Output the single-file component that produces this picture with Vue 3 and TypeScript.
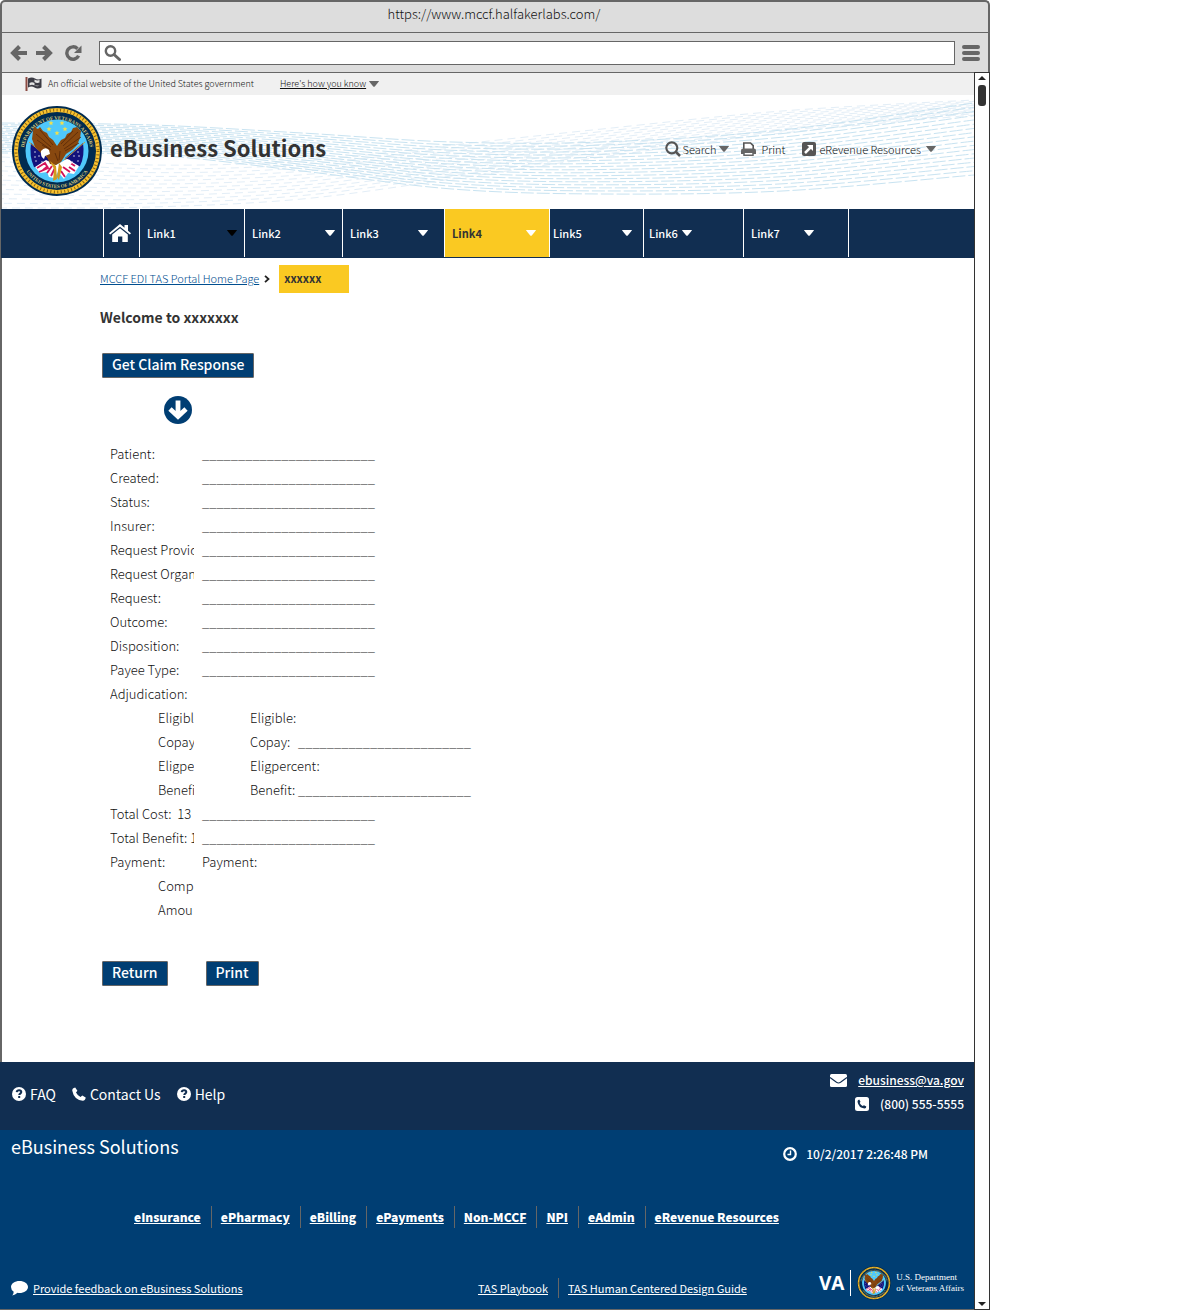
<script setup lang="ts">
interface NavItem { label: string; mod?: string }
interface Row { label: string; nested?: boolean; value?: string; sub?: string; blank?: boolean }

const navItems: NavItem[] = [
  { label: 'Link1', mod: 'muted' },
  { label: 'Link2' },
  { label: 'Link3', mod: 'pad-md' },
  { label: 'Link4', mod: 'active' },
  { label: 'Link5', mod: 'tight' },
  { label: 'Link6', mod: 'packed' },
  { label: 'Link7', mod: 'pad-lg' },
]

const blankLine = '_'.repeat(24)

const rows: Row[] = [
  { label: 'Patient:', blank: true },
  { label: 'Created:', blank: true },
  { label: 'Status:', blank: true },
  { label: 'Insurer:', blank: true },
  { label: 'Request Provid', blank: true },
  { label: 'Request Organ', blank: true },
  { label: 'Request:', blank: true },
  { label: 'Outcome:', blank: true },
  { label: 'Disposition:', blank: true },
  { label: 'Payee Type:', blank: true },
  { label: 'Adjudication:' },
  { label: 'Eligibl', nested: true, sub: 'Eligible:' },
  { label: 'Copay', nested: true, sub: 'Copay:', blank: true },
  { label: 'Eligpe', nested: true, sub: 'Eligpercent:' },
  { label: 'Benefi', nested: true, sub: 'Benefit:', blank: true },
  { label: 'Total Cost:  13', blank: true },
  { label: 'Total Benefit: 1', blank: true },
  { label: 'Payment:', value: 'Payment:' },
  { label: 'Comp', nested: true },
  { label: 'Amou', nested: true },
]

const businessLinks = ['eInsurance', 'ePharmacy', 'eBilling', 'ePayments', 'Non-MCCF', 'NPI', 'eAdmin', 'eRevenue Resources']

type Pt = [number, number]

// Smooth curve through a list of points
function smooth(p: Pt[]): string {
  let d = `M${p[0][0]} ${p[0][1]}`
  for (let i = 0; i < p.length - 1; i++) {
    const a = p[Math.max(i - 1, 0)]
    const b = p[i]
    const c = p[i + 1]
    const e = p[Math.min(i + 2, p.length - 1)]
    d += ` C${b[0] + (c[0] - a[0]) / 6} ${b[1] + (c[1] - a[1]) / 6} ${c[0] - (e[0] - b[0]) / 6} ${c[1] - (e[1] - b[1]) / 6} ${c[0]} ${c[1]}`
  }
  return d
}

// Fills the band between two edges with evenly spread curves
function band(xs: number[], top: number[], bottom: number[], n: number): string[] {
  return Array.from({ length: n }, (_, k) => {
    const t = k / (n - 1)
    return smooth(xs.map((x, i) => [x, top[i] + (bottom[i] - top[i]) * t] as Pt))
  })
}

const xs = [0, 150, 300, 450, 600, 780, 972]
const blueWaves = band(xs, [28, 30, 38, 47, 47, 35, 8], [58, 60, 76, 94, 99, 96, 80], 18)
const paleWaves = band(xs, [62, 70, 66, 50, 34, 16, 5], [113, 112, 104, 84, 62, 38, 20], 12)
</script>

<template>
  <div class="browser">
    <svg class="defs" width="0" height="0" aria-hidden="true">
      <symbol id="caret" viewBox="0 0 10 6"><path d="M.6 0h8.800q.6 0 .4.600L6 5.200q-1 1-2 0L.2.600Q0 0 .6 0z" fill="currentColor" /></symbol>
      <symbol id="question" viewBox="0 0 14 14">
        <circle cx="7" cy="7" r="7" fill="#fff" />
        <path d="M4.700 5.200C4.900 3.700 6 3.200 7.100 3.200c1.200 0 2.200.8 2.200 1.900 0 1.600-2 1.500-2 2.900" fill="none" stroke="#112e51" stroke-width="2" />
        <rect x="6.200" y="9" width="2" height="2" fill="#112e51" />
      </symbol>
      <symbol id="seal" viewBox="0 0 90 90">
        <defs>
          <path id="arc-top" d="M11.500 47a33.500 33.500 0 0 1 67 0" />
          <path id="arc-bottom" d="M8 45a37 37 0 0 0 74 0" />
        </defs>
        <circle cx="45" cy="45" r="45" fill="#002b50" />
        <circle cx="45" cy="45" r="41" fill="none" stroke="#f9c22e" stroke-width="4" />
        <circle cx="45" cy="45" r="41" fill="none" stroke="#8a6414" stroke-width="3" stroke-dasharray="1 2.500" />
        <circle cx="45" cy="45" r="31.500" fill="#4fc8fb" />
        <text class="seal-text"><textPath href="#arc-top" startOffset="50%" text-anchor="middle">DEPARTMENT OF VETERANS AFFAIRS</textPath></text>
        <text class="seal-text"><textPath href="#arc-bottom" startOffset="50%" text-anchor="middle">UNITED STATES OF AMERICA</textPath></text>
        <g fill="#f5e04a">
          <path v-for="(s, i) in [[39, 17], [50, 17], [37, 23], [53, 23], [45, 27]]" :key="i" :transform="`translate(${s[0]} ${s[1]})`" d="M0-2.500.7-.8 2.500-.7 1.100.5 1.600 2.300 0 1.300-1.600 2.300-1.100.5-2.500-.7-.7-.8z" />
        </g>
        <path d="M19 37l19 15-4 12-12-3q-5-11-3-24zM71 37L53 52l4 11 11-3q5-10 3-23z" fill="#12127c" />
        <path d="M17 36l22 18M73 36L52 54" stroke="#c9a13c" stroke-width="1" />
        <g fill="#fff">
          <circle v-for="(s, i) in [[23, 46], [27, 50], [24, 55], [30, 56], [66, 46], [62, 50], [66, 55], [60, 56], [23, 51], [67, 50]]" :key="i" :cx="s[0]" :cy="s[1]" r=".7" />
        </g>
        <path d="M23 61l11-7 10 5 11-6 12 7-5 8-6-1-4 6-6-7-4 6-5-1-2-5-7 1z" fill="#fff" />
        <path d="M25 62l8-5 3 5-9 4M35 67l5-7M39 70l4-8M55 55l8 5M51 61l7 5M49 65l4 6M57 61l6 4M31 64l5-4" fill="none" stroke="#d4145a" stroke-width="1.900" />
        <path d="M21 25l1-4 4 2 2-2 3 4 4 2 2 4 4 3 4 6 4-6 4-2 2-4 4-2 2-4 4-1 4 4-1 7-3 7-5 5-6 4-5 8-5 3-6-1-3-7-6-4-6-6-3-8z" fill="#88480f" />
        <path d="M24 28l15 13M28 24l13 15M25 34l13 9M30 39l9 5M66 26L51 40M69 31L52 43M67 37l-14 8M61 25L49 38M43 47l3 8M48 45l-1 9" stroke="#5b2a08" stroke-width=".9" fill="none" />
        <path d="M29 45q4-5 8-1l1 4-5 2-1 3q-4-3-3-8zM51 56q3-4 7-2l2 3-4 4-5-1z" fill="#fff" />
        <path d="M38 55l6 5 1 13-4 2 1-12zM47 57l3 4-3 13-2-3z" fill="#d49a1c" />
      </symbol>
    </svg>

    <header class="chrome">
      <div class="title-bar">https://www.mccf.halfakerlabs.com/</div>
      <div class="toolbar">
        <button class="tool back" type="button" aria-label="Back">
          <svg width="17" height="16" viewBox="0 0 17 16"><path d="M9.500 1.500L3 8l6.500 6.500M3 8h14" fill="none" stroke="#666" stroke-width="4" /></svg>
        </button>
        <button class="tool forward" type="button" aria-label="Forward">
          <svg width="17" height="16" viewBox="0 0 17 16"><path d="M7.500 1.500L14 8l-6.500 6.500M14 8H0" fill="none" stroke="#666" stroke-width="4" /></svg>
        </button>
        <button class="tool reload" type="button" aria-label="Reload">
          <svg width="17" height="16" viewBox="0 0 17 16"><path d="M13.600 10.800A6.200 6.200 0 1 1 12.500 3.700" fill="none" stroke="#666" stroke-width="3.400" /><path d="M16.500.500v7.500H9z" fill="#666" /></svg>
        </button>
        <label class="address">
          <svg width="17" height="16" viewBox="0 0 17 16"><circle cx="6.500" cy="6" r="4.700" fill="none" stroke="#666" stroke-width="2.400" /><path d="M10 9.500l5.500 5" stroke="#666" stroke-width="3" stroke-linecap="round" /></svg>
          <input type="text" aria-label="Address">
        </label>
        <button class="tool menu" type="button" aria-label="Menu">
          <svg width="18" height="16" viewBox="0 0 18 16"><path d="M2 2h14M2 8h14M2 14h14" stroke="#666" stroke-width="4" stroke-linecap="round" /></svg>
        </button>
      </div>
    </header>

    <div class="viewport">
      <div class="page">
        <div class="banner">
          <svg width="17" height="14" viewBox="0 0 17 14"><path d="M1.500 0v14" stroke="#8b4a42" stroke-width="2" /><path d="M3 1.500q4-2 7 0t6.500 0v9q-4 2-7 0T3 10.500z" fill="#3b3b44" /><path d="M9.500 2.500q2.500 1.500 5 .5v2.500q-2.500 1-5-.5zM4.500 6q2.500-1.500 5 0v2.500q-2.500-1.500-5 0zM9.500 8.500q2.500 1.200 5 .2" fill="#e5e5e5" /></svg>
          <span>An official website of the United States government</span>
          <a href="#">Here's how you know</a>
          <svg class="caret" width="10" height="6"><use href="#caret" /></svg>
        </div>

        <div class="masthead">
          <svg class="waves" viewBox="0 0 972 114" preserveAspectRatio="none" aria-hidden="true">
            <path v-for="(d, i) in paleWaves" :key="'p' + i" :d="d" stroke="#e3eef7" stroke-dasharray="8 5" :stroke-dashoffset="i * 5" />
            <path v-for="(d, i) in blueWaves" :key="'b' + i" :d="d" stroke="#c8e3f1" stroke-dasharray="13 3" :stroke-dashoffset="i * 7" />
          </svg>
          <svg class="seal" width="90" height="90"><use href="#seal" /></svg>
          <h1>eBusiness Solutions</h1>
          <div class="utilities">
            <button class="util search" type="button">
              <svg width="16" height="16" viewBox="0 0 16 16"><circle cx="6.800" cy="6.800" r="5.500" fill="none" stroke="#555" stroke-width="2.200" /><path d="M11 11l4 4" stroke="#555" stroke-width="2.500" /></svg>
              <span>Search</span>
              <svg class="caret" width="10" height="6"><use href="#caret" /></svg>
            </button>
            <button class="util print" type="button">
              <svg width="15" height="14" viewBox="0 0 15 14"><path d="M2.800 7V1h6.700l2.700 2.700V7" fill="#fff" stroke="#555" stroke-width="1.600" /><path d="M2 6.500h11q2 0 2 2V12H0V8.500q0-2 2-2z" fill="#666" /><path d="M3 10.200h9v3H3z" fill="#fff" stroke="#666" stroke-width="1.500" /></svg>
              <span>Print</span>
            </button>
            <button class="util resources" type="button">
              <svg width="14" height="14" viewBox="0 0 14 14"><rect width="14" height="14" rx="2" fill="#555" /><path d="M3 11l6-6" stroke="#fff" stroke-width="2.500" /><path d="M5 3h6v6z" fill="#fff" /></svg>
              <span>eRevenue Resources</span>
              <svg class="caret" width="10" height="6"><use href="#caret" /></svg>
            </button>
          </div>
        </div>

        <nav class="main-nav" aria-label="Main">
          <a class="home" href="#" aria-label="Home">
            <svg width="22" height="18" viewBox="0 0 22 18"><path d="M0 9.200L11 0l4.500 3.700V1H19v5.700l3 2.500-1.200 1.400L11 2.700 1.200 10.600z" fill="#fff" /><path d="M3.200 10.500L11 4.200l7.800 6.300V18h-5.500v-5.500H9V18H3.200z" fill="#fff" /></svg>
          </a>
          <button v-for="item in navItems" :key="item.label" type="button" :class="item.mod">
            <span>{{ item.label }}</span>
            <svg width="10" height="6"><use href="#caret" /></svg>
          </button>
        </nav>

        <main>
          <div class="crumbs">
            <a href="#">MCCF EDI TAS Portal Home Page</a>
            <svg width="6" height="8" viewBox="0 0 6 8"><path d="M1 .800L4.500 4 1 7.200" fill="none" stroke="#222" stroke-width="1.800" /></svg>
            <span class="current">xxxxxx</span>
          </div>
          <h2>Welcome to xxxxxxx</h2>
          <button class="btn claim" type="button">Get Claim Response</button>
          <svg class="down" width="28" height="28" viewBox="0 0 28 28"><circle cx="14" cy="14" r="14" fill="#003e73" /><path d="M14 4.500v16M6 13l8 7.500 8-7.500" fill="none" stroke="#fff" stroke-width="4.800" /></svg>

          <dl>
            <div v-for="(row, i) in rows" :key="i" class="row">
              <dt :class="{ nested: row.nested }">{{ row.label }}</dt>
              <dd :class="{ nested: row.sub }">
                <span v-if="row.sub" class="sub">{{ row.sub }}</span>
                <span v-if="row.value">{{ row.value }}</span>
                <span v-if="row.blank" class="blank">{{ blankLine }}</span>
              </dd>
            </div>
          </dl>

          <div class="actions">
            <button class="btn" type="button">Return</button>
            <button class="btn" type="button">Print</button>
          </div>
        </main>

        <footer>
          <div class="contact">
            <div class="help">
              <a href="#"><svg width="14" height="14"><use href="#question" /></svg>FAQ</a>
              <a href="#"><svg width="14" height="14" viewBox="0 0 14 14"><path d="M3.200.500L5.400 3.800 4 5.500q1.500 3 4.500 4.500l1.800-1.400L13.700 10.600Q13.500 13.600 10.800 13.800 2 13 .2 3.500.2 1 3.200.500z" fill="#fff" /></svg>Contact Us</a>
              <a href="#"><svg width="14" height="14"><use href="#question" /></svg>Help</a>
            </div>
            <address>
              <div>
                <svg width="17" height="13" viewBox="0 0 17 13"><rect width="17" height="13" rx="1.500" fill="#fff" /><path d="M0 3.500l6.500 4.800q2 1.300 4 0L17 3.500" fill="none" stroke="#112e51" stroke-width="1.100" /></svg>
                <a href="#">ebusiness@va.gov</a>
              </div>
              <div>
                <svg width="14" height="14" viewBox="0 0 14 14"><rect width="14" height="14" rx="2.500" fill="#fff" /><path d="M4.200 2.500L5.500 4.800 4.700 6q1 2 2.900 3L9 8.200l2.300 1.300q0 1.800-1.800 2Q3.500 11 2.500 4.800q0-1.900 1.700-2.300z" fill="#112e51" /></svg>
                <span>(800) 555-5555</span>
              </div>
            </address>
          </div>

          <div class="base">
            <div class="base-top">
              <span class="brand">eBusiness Solutions</span>
              <span class="clock">
                <svg width="14" height="14" viewBox="0 0 14 14"><circle cx="7" cy="7" r="5.800" fill="none" stroke="#fff" stroke-width="2.200" /><path d="M7.500 3.500v4H4.500" fill="none" stroke="#fff" stroke-width="1.400" /></svg>
                10/2/2017 2:26:48 PM
              </span>
            </div>
            <ul class="links">
              <li v-for="link in businessLinks" :key="link"><a href="#">{{ link }}</a></li>
            </ul>
            <div class="base-bottom">
              <div class="feedback">
                <svg width="17" height="15" viewBox="0 0 17 15"><path d="M8.500 0C13.200 0 17 2.600 17 6s-3.800 6-8.500 6q-1 0-2-.2Q4.200 14 1.200 14.500q1.400-1.500 1.500-3.800Q0 8.900 0 6c0-3.400 3.800-6 8.500-6z" fill="#fff" /></svg>
                <a href="#">Provide feedback on eBusiness Solutions</a>
              </div>
              <ul class="guides">
                <li><a href="#">TAS Playbook</a></li>
                <li><a href="#">TAS Human Centered Design Guide</a></li>
              </ul>
              <div class="va">
                <b>VA</b>
                <svg width="34" height="36"><use href="#seal" /></svg>
                <span>U.S. Department<br>of Veterans Affairs</span>
              </div>
            </div>
          </div>
        </footer>
      </div>

      <div class="scrollbar" aria-hidden="true">
        <svg width="8" height="4" viewBox="0 0 8 4"><path d="M0 4l4-4 4 4z" fill="#222" /></svg>
        <div class="thumb" />
        <svg width="8" height="4" viewBox="0 0 8 4"><path d="M0 0l4 4 4-4z" fill="#222" /></svg>
      </div>
    </div>
  </div>
</template>

<style>
body {
  margin: 0;
  background: #fff;
}
</style>

<style scoped>
.browser {
  max-width: 990px;
  font-family: "Noto Sans CJK SC", "Noto Sans", sans-serif;
  font-size: 13px;
  font-weight: 300;
  line-height: 24px;
  color: #111;
}
.browser * { box-sizing: border-box; }
.defs { position: absolute; }
svg { display: block; flex: none; }
a { color: inherit; }
button {
  border: 0;
  padding: 0;
  background: none;
  color: inherit;
  font: inherit;
  cursor: pointer;
}
ul, dl, dd, h1, h2 { margin: 0; padding: 0; }

.chrome {
  border: 2px solid #666;
  border-bottom: 0;
  border-radius: 5px 5px 0 0;
  background: #ddd;
}
.title-bar {
  height: 31px;
  border-bottom: 1px solid #666;
  padding-right: 2px;
  text-align: center;
}
.toolbar {
  display: flex;
  align-items: center;
  height: 40px;
  border-bottom: 1px solid #666;
  padding: 0 8px;
}
.forward { margin-left: 9px; }
.reload { margin-left: 12px; }
.address {
  display: flex;
  flex: 1;
  align-items: center;
  height: 24px;
  margin: 0 7px 0 17px;
  border: 1px solid #666;
  padding-left: 4px;
  background: #fff;
}
.address input {
  flex: 1;
  min-width: 0;
  border: 0;
  outline: 0;
  background: none;
  font: inherit;
}

.viewport { display: flex; }
.page {
  flex: 1;
  min-width: 0;
  border-bottom: 1px solid #666;
}
.scrollbar {
  display: flex;
  flex-direction: column;
  align-items: center;
  width: 16px;
  margin-top: -1px;
  border: 1px solid #333;
  padding: 3px 0;
}
.thumb {
  width: 8px;
  height: 21px;
  margin: 5px 0 auto;
  border-radius: 3px;
  background: #333;
}

.banner {
  display: flex;
  align-items: center;
  height: 22px;
  border-left: 2px solid #666;
  padding-left: 23px;
  background: #f0f0f0;
  font-size: 9px;
}
.banner span { margin-left: 6px; }
.banner a { margin-left: 26px; }
.caret { margin-left: 3px; color: #666; }

.masthead {
  position: relative;
  display: flex;
  align-items: center;
  height: 114px;
  border-left: 2px solid #666;
  padding: 0 38px 2px 10px;
}
.waves {
  position: absolute;
  inset: 0;
  width: 100%;
  height: 100%;
}
.waves path { fill: none; }
.seal, h1, .utilities { position: relative; }
.seal-text {
  fill: #d9c77a;
  font-family: "Liberation Serif", serif;
  font-size: 5px;
  font-weight: 700;
}
h1 {
  margin: 0 auto 8px 8px;
  color: #333;
  font-size: 22px;
  line-height: 32px;
}
.utilities {
  display: flex;
  margin-bottom: 4px;
  font-size: 11px;
}
.util { display: flex; align-items: center; }
.util span { margin-left: 2px; }
.print { margin-left: 12px; }
.print span { margin-left: 5px; }
.resources { margin-left: 17px; }
.resources span { margin: 0 2px 0 3px; }

.main-nav {
  display: grid;
  grid-template-columns: 36px 105px 98px 102px 105px 94px 100px 106px;
  height: 49px;
  border-left: 1px solid #666;
  padding-left: 102px;
  background: #112e51;
  color: #fff;
  font-size: 11px;
  font-weight: 500;
}
.main-nav > * {
  display: flex;
  align-items: center;
  justify-content: space-between;
  height: 48px;
  border-left: 1px solid #fff;
  padding: 0 7px;
}
.main-nav .home { padding: 0 0 0 5px; }
.main-nav > :last-child { border-right: 1px solid #fff; }
.main-nav .muted svg { color: #000; }
.main-nav .pad-md { padding-right: 16px; }
.main-nav .active {
  padding-right: 13px;
  background: #fac922;
  color: #333;
  font-weight: 700;
}
.main-nav .active svg { color: #fff; }
.main-nav .tight { padding: 0 11px 0 3px; }
.main-nav .packed { justify-content: flex-start; gap: 4px; padding-left: 5px; }
.main-nav .pad-lg { padding-right: 34px; }

main {
  border-left: 2px solid #666;
  padding: 7px 0 76px 98px;
}
.crumbs {
  display: flex;
  align-items: center;
  font-size: 11px;
}
.crumbs a { padding-bottom: 2px; color: #004e8f; }
.crumbs svg { margin: 0 9px 0 5px; }
.current {
  width: 70px;
  padding: 1px 5px 3px;
  background: #fac922;
  color: #333;
  font-weight: 700;
}
h2 {
  margin-top: 12px;
  color: #333;
  font-size: 14px;
  line-height: 24px;
}
.btn {
  height: 25px;
  border: 1px solid #666;
  border-radius: 1px;
  padding: 0 9px 3px;
  background: #003e73;
  color: #fff;
  font-size: 14px;
  font-weight: 500;
  line-height: 20px;
}
.claim { display: block; margin: 24px 0 0 2px; }
.down { margin: 18px 0 18px 64px; }
.row {
  display: grid;
  grid-template-columns: 84px 1fr;
  column-gap: 8px;
  height: 24px;
  padding-left: 10px;
}
dt { overflow: hidden; white-space: pre; }
dt.nested { padding-left: 48px; }
dd { display: flex; white-space: nowrap; }
dd.nested { padding-left: 48px; }
.sub { min-width: 48px; }
.blank { color: #444; }
.actions {
  display: flex;
  gap: 38px;
  margin: 39px 0 0 2px;
}

footer { color: #fff; font-weight: 400; }
.contact {
  display: flex;
  justify-content: space-between;
  height: 68px;
  padding: 6px 10px 0 12px;
  background: #112e51;
}
.help {
  display: flex;
  gap: 16px;
  padding-top: 14px;
  font-size: 14px;
}
.help a {
  display: flex;
  gap: 4px;
  align-items: center;
  height: 24px;
  text-decoration: none;
}
address {
  font-size: 12px;
  font-style: normal;
  font-weight: 500;
}
address div {
  display: flex;
  gap: 11px;
  align-items: center;
  justify-content: flex-end;
}
.base {
  padding: 4px 10px 7px 11px;
  background: #003e73;
}
.base-top {
  display: flex;
  justify-content: space-between;
  padding-right: 36px;
}
.brand { font-size: 18px; }
.clock {
  display: flex;
  gap: 9px;
  align-items: center;
  padding-top: 8px;
  font-size: 12px;
  font-weight: 500;
}
ul { display: flex; list-style: none; }
.links {
  margin: 40px 0 36px 123px;
  font-size: 12px;
  font-weight: 900;
  line-height: 22px;
}
li + li {
  margin-left: 10px;
  border-left: 1px solid #666;
  padding-left: 9px;
}
.base-bottom {
  display: flex;
  align-items: center;
  height: 38px;
  font-size: 11px;
}
.feedback {
  display: flex;
  gap: 5px;
  align-items: center;
  width: 49%;
  padding-top: 10px;
}
.guides { padding-top: 10px; line-height: 20px; }
.va {
  display: flex;
  align-items: center;
  margin-left: auto;
  font-family: "Liberation Serif", serif;
  line-height: 11px;
}
.va b {
  margin-right: 6px;
  border-right: 1px solid #fff;
  padding-right: 6px;
  font-family: "Open Sans", sans-serif;
  font-size: 19px;
  line-height: 26px;
}
.va span { margin-left: 5px; font-size: 9px; }
</style>
